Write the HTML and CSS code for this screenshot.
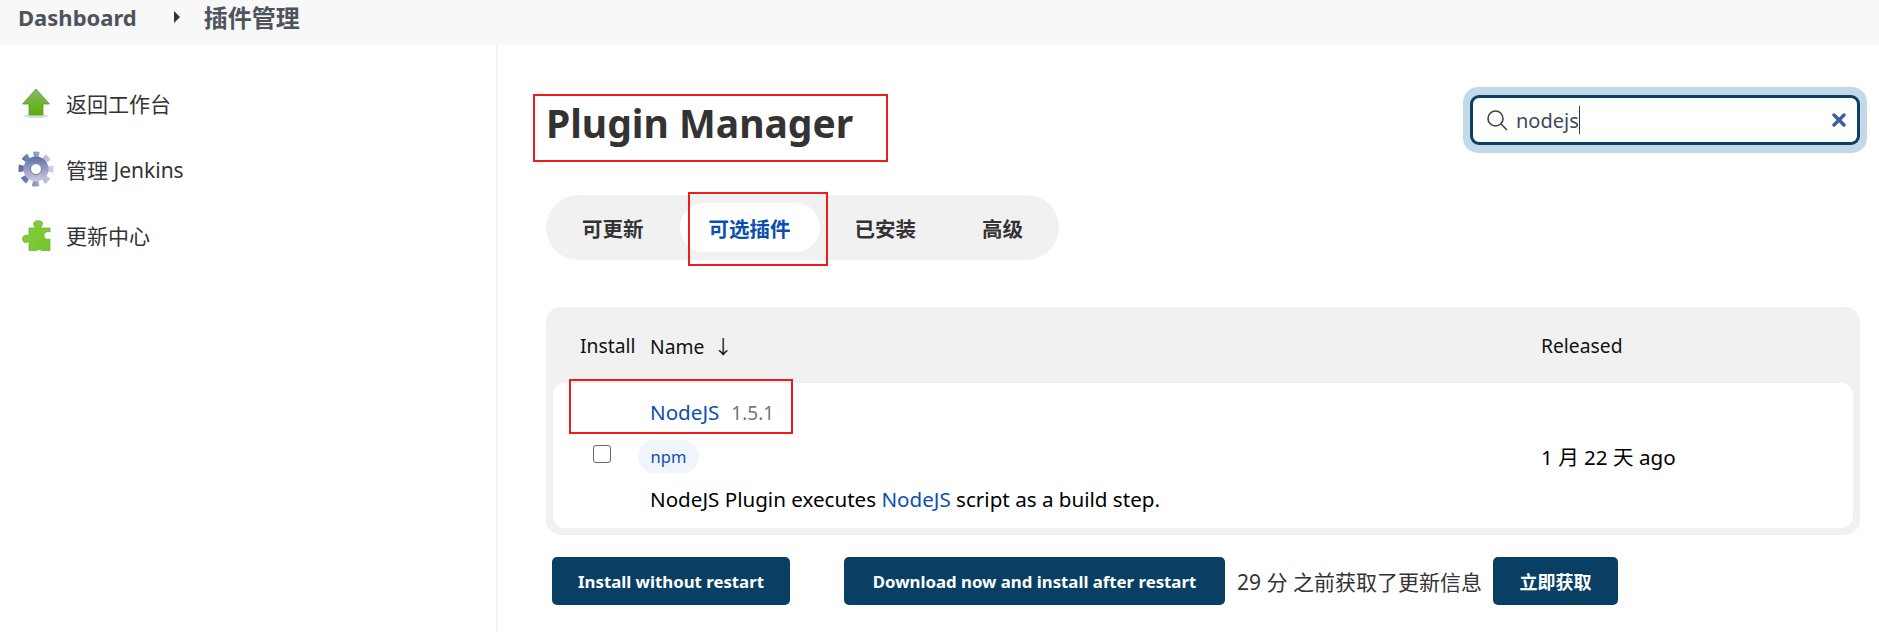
FILE: index.html
```html
<!DOCTYPE html>
<html>
<head>
    <meta charset="utf-8">
    <title>Plugin Manager</title>
    <link rel="stylesheet" href="styles.css">
</head>
<body>
<div class="top-bar">
    <a class="crumb">Dashboard</a>
    <span class="crumb-arrow"></span>
    <a class="crumb crumb-cn">插件管理</a>
</div>
<div class="page">
    <div class="side-panel">
        <div class="side-item">
            <svg class="side-icon" width="36" height="36" viewBox="0 0 36 36">
                <defs>
                    <linearGradient id="arrow-fill" x1="0" y1="0" x2="0" y2="1">
                        <stop offset="0" stop-color="#8ab86a"/>
                        <stop offset="1" stop-color="#58b000"/>
                    </linearGradient>
                </defs>
                <ellipse cx="18" cy="31" rx="12" ry="2" fill="#ddd"/>
                <path d="M18 4 L31.5 19 H25 V30 H11 V19 H4.5 Z" fill="url(#arrow-fill)" stroke="#5f9a3a" stroke-width="0.8"/>
            </svg>
            <span>返回工作台</span>
        </div>
        <div class="side-item">
            <svg class="side-icon" width="36" height="36" viewBox="0 0 36 36">
                <defs>
                    <linearGradient id="gear-fill" x1="0" y1="0" x2="0" y2="1">
                        <stop offset="0" stop-color="#5a70a2"/>
                        <stop offset="1" stop-color="#d0cbe3"/>
                    </linearGradient>
                </defs>
                <circle cx="18" cy="18" r="14.5" fill="none" stroke="url(#gear-fill)" stroke-width="6" stroke-dasharray="6.4 5" stroke-dashoffset="3.2" transform="rotate(-90 18 18)"/>
                <circle cx="18" cy="18" r="12.5" fill="url(#gear-fill)"/>
                <circle cx="18" cy="18" r="5.5" fill="#fff" stroke="#77789a" stroke-width="1"/>
            </svg>
            <span>管理 Jenkins</span>
        </div>
        <div class="side-item">
            <svg class="side-icon" width="36" height="36" viewBox="-4 -3 36 36">
                <defs>
                    <linearGradient id="puzzle-fill" x1="0" y1="0" x2="1" y2="1">
                        <stop offset="0" stop-color="#86cf3c"/>
                        <stop offset="1" stop-color="#74c52e"/>
                    </linearGradient>
                </defs>
                <path d="M7 8 H13 C13 6 11 5 12 2.5 C13 0 20 0 20.5 3 C21 5 19 6 19 8 H28 V12 C25 11 22 12 22 15.5 C22 19 25 20 28 19 V30.5 H19 C19 29 15 29 15 30.5 H7 V22 C6 21 5 23 3 22.5 C0 22 0 16 2.5 15.5 C4.5 15 6 16 7 15 Z" fill="url(#puzzle-fill)" stroke="#6aa832" stroke-width="0.7"/>
            </svg>
            <span>更新中心</span>
        </div>
    </div>
    <div class="content">
        <div class="content-head">
            <div class="title-wrap">
                <h1 class="title">Plugin Manager</h1>
                <div class="mark mark-title"></div>
            </div>
            <div class="search-ring">
                <div class="search-box">
                    <svg width="22" height="22" viewBox="0 0 22 22" fill="none" stroke="#444" stroke-width="1.6">
                        <circle cx="9.5" cy="9.5" r="7.5"/>
                        <path d="M15 15 L21 21"/>
                    </svg>
                    <span class="search-text">nodejs</span>
                    <span class="search-caret"></span>
                    <svg class="search-clear" width="14" height="14" viewBox="0 0 14 14" stroke="#3f5e9e" stroke-width="3.4" stroke-linecap="round">
                        <path d="M2 2 L12 12 M12 2 L2 12"/>
                    </svg>
                </div>
            </div>
        </div>
        <div class="tabs">
            <a class="tab">可更新</a>
            <a class="tab tab-active">可选插件<span class="mark mark-tab"></span></a>
            <a class="tab tab-installed">已安装</a>
            <a class="tab">高级</a>
        </div>
        <div class="plugin-table">
            <div class="table-head">
                <div class="col-install">Install</div>
                <div>Name <span class="sort-arrow">↓</span></div>
                <div>Released</div>
            </div>
            <div class="table-row">
                <div class="mark mark-row"></div>
                <div class="col-check"><span class="checkbox"></span></div>
                <div class="col-name">
                    <div class="plugin-title"><a class="link">NodeJS</a><span class="version">1.5.1</span></div>
                    <div class="pill">npm</div>
                    <div class="plugin-desc">NodeJS Plugin executes <a class="link">NodeJS</a> script as a build step.</div>
                </div>
                <div class="col-date">1 月 22 天 ago</div>
            </div>
        </div>
        <div class="actions">
            <button class="btn btn-first">Install without restart</button>
            <button class="btn btn-download">Download now and install after restart</button>
            <span class="fetch-note">29 分 之前获取了更新信息</span>
            <button class="btn btn-fetch">立即获取</button>
        </div>
    </div>
</div>
</body>
</html>
```
FILE: styles.css
```css
* {
    box-sizing: border-box;
}

body {
    margin: 0;
    height: 100vh;
    overflow: hidden;
    display: flex;
    flex-direction: column;
    background: #fff;
    color: #333;
    font-family: "Noto Sans", "Noto Sans CJK SC", sans-serif;
}

.top-bar {
    height: 45px;
    flex: none;
    display: flex;
    align-items: center;
    padding: 0 0 12px 18px;
    background: #f8f8f8;
}

.crumb {
    font-size: 22px;
    font-weight: 700;
    color: #4d545d;
}

.crumb-cn {
    font-size: 24px;
}

.crumb-arrow {
    width: 0;
    height: 0;
    margin: 0 24px 0 37px;
    border-left: 6px solid #333;
    border-top: 6.5px solid transparent;
    border-bottom: 6.5px solid transparent;
}

.page {
    flex: 1;
    display: flex;
}

.side-panel {
    width: 498px;
    flex: none;
    padding-top: 25px;
    border-right: 2px solid #f4f4f4;
}

.side-item {
    height: 66px;
    display: flex;
    align-items: center;
    gap: 12px;
    padding-left: 18px;
    font-size: 21px;
    color: #333;
}

.content {
    flex: 1;
    padding: 42px 19px 0 48px;
}

.content-head {
    display: flex;
    justify-content: space-between;
    align-items: center;
}

.title-wrap {
    position: relative;
    padding-top: 6px;
}

.title {
    margin: 0;
    font-size: 39px;
    line-height: 52px;
    font-weight: 700;
    color: #333;
}

.mark {
    position: absolute;
    border: 2px solid #f01c1c;
    pointer-events: none;
}

.mark-title {
    left: -13px;
    top: 3px;
    width: 355px;
    height: 68px;
}

.search-ring {
    width: 404px;
    height: 66px;
    margin-right: -7px;
    padding: 8px 7px;
    border-radius: 15px;
    background: #c3d9e7;
}

.search-box {
    height: 100%;
    display: flex;
    align-items: center;
    padding: 0 11px 0 13px;
    border: 3px solid #0b3f63;
    border-radius: 9px;
    background: #fff;
}

.search-text {
    margin-left: 8px;
    font-size: 20px;
    color: #3c4a5c;
}

.search-caret {
    width: 1px;
    height: 28px;
    background: #333;
}

.search-clear {
    margin-left: auto;
}

.tabs {
    width: 513px;
    height: 65px;
    margin-top: 42px;
    display: flex;
    align-items: center;
    padding: 0 8px 0 0;
    border-radius: 33px;
    background: #f1f1f1;
}

.tab {
    position: relative;
    flex: none;
    height: 49px;
    display: flex;
    align-items: center;
    padding: 0 33px;
    font-size: 20.5px;
    font-weight: 700;
    white-space: nowrap;
    color: #333;
}

.tab:first-child {
    padding: 0 36px;
}

.tab-active {
    width: 140px;
    justify-content: center;
    padding: 0;
    border-radius: 25px;
    background: #fff;
    color: #0b4fb3;
}

.tab-installed {
    margin-left: 2px;
}

.mark-tab {
    left: 8px;
    top: -11px;
    width: 140px;
    height: 74px;
}

.plugin-table {
    height: 228px;
    margin-top: 47px;
    padding: 0 7px 7px;
    border-radius: 15px;
    background: #f1f1f1;
    color: #111;
    font-size: 19.3px;
}

.table-head,
.table-row {
    display: grid;
    grid-template-columns: 97px 1fr 312px;
}

.table-head {
    height: 76px;
    padding-top: 1px;
    align-items: center;
}

.col-install {
    padding-left: 27px;
}

.sort-arrow {
    margin-left: 4px;
}

.table-row {
    position: relative;
    height: 145px;
    align-items: center;
    border-radius: 12px;
    background: #fff;
    color: #000;
    font-size: 20.6px;
}

.mark-row {
    left: 16px;
    top: -4px;
    width: 224px;
    height: 55px;
}

.col-check {
    display: flex;
    padding: 0 0 4px 40px;
}

.checkbox {
    width: 18px;
    height: 18px;
    border: 1.5px solid #666;
    border-radius: 3px;
    background: #fff;
}

.col-name {
    height: 100%;
    padding-top: 15px;
}

.plugin-title {
    height: 28px;
    line-height: 28px;
}

.link {
    color: #0b4fb3;
}

.version {
    margin-left: 12px;
    font-size: 19px;
    color: #777;
}

.pill {
    width: 61px;
    height: 33px;
    margin: 14px 0 0 -12px;
    text-align: center;
    line-height: 33px;
    font-size: 16.5px;
    border-radius: 17px;
    background: #f1f4fb;
    color: #0b4fb3;
}

.plugin-desc {
    margin-top: 12px;
    line-height: 28px;
}

.actions {
    margin-top: 22px;
    padding-left: 6px;
    display: flex;
    align-items: center;
}

.btn {
    height: 48px;
    padding: 0;
    border: 0;
    border-radius: 5px;
    background: #083f63;
    color: #fff;
    font-family: inherit;
    font-size: 16.8px;
    font-weight: 700;
}

.btn-first {
    width: 238px;
    margin-right: 54px;
}

.btn-download {
    width: 381px;
}

.fetch-note {
    margin: 0 11px 0 12px;
    font-size: 21px;
    color: #333;
}

.btn-fetch {
    width: 125px;
    font-size: 18px;
}
```
